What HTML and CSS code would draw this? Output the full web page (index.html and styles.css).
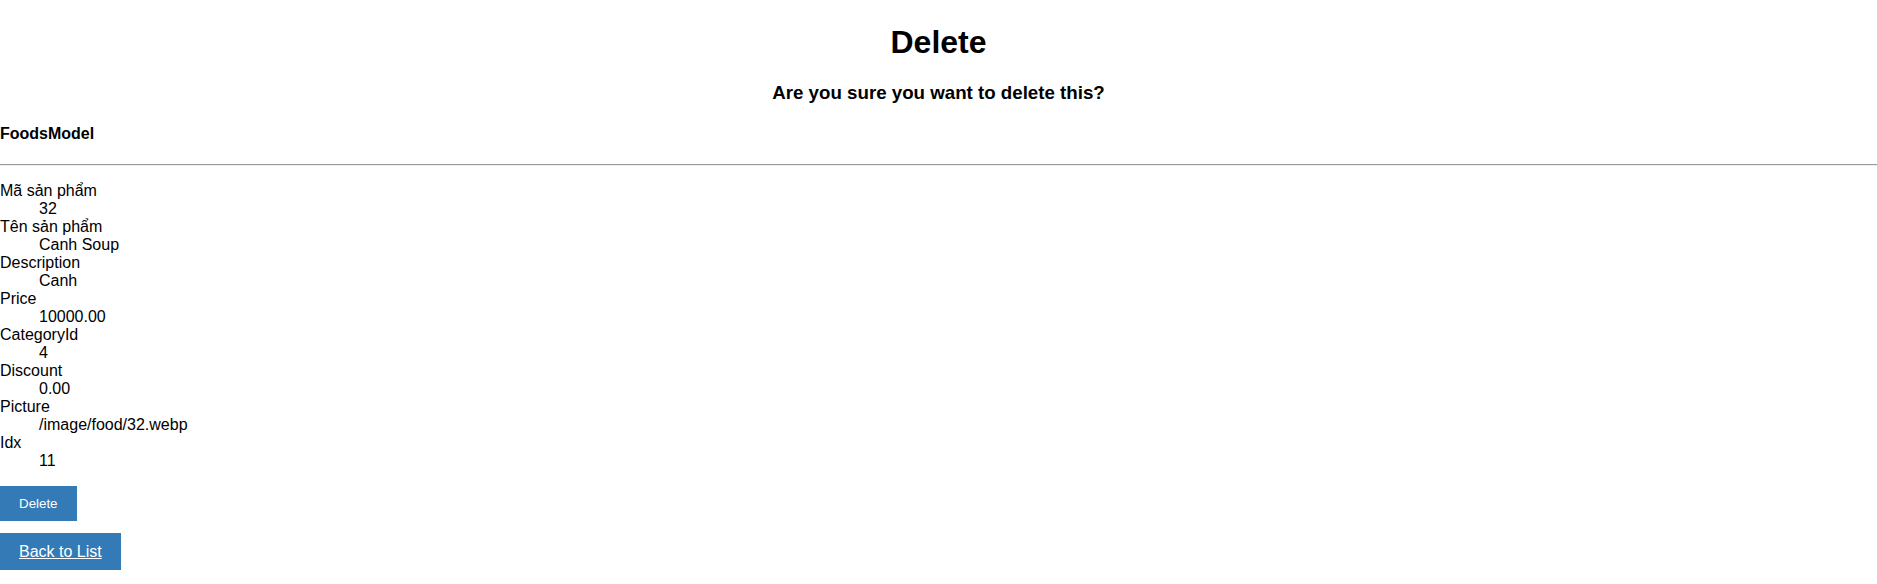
FILE: index.html
```html
<!DOCTYPE html>
<html lang="vi">
<head>
<meta charset="utf-8">
<title>Delete</title>
<link rel="stylesheet" href="styles.css">
</head>
<body>
<main class="page">
  <h1 class="title">Delete</h1>
  <h3 class="confirm">Are you sure you want to delete this?</h3>
  <div class="details">
    <h4 class="model">FoodsModel</h4>
    <hr class="rule">
    <dl class="fields">
      <dt>Mã sản phẩm</dt><dd>32</dd>
      <dt>Tên sản phẩm</dt><dd>Canh Soup</dd>
      <dt>Description</dt><dd>Canh</dd>
      <dt>Price</dt><dd>10000.00</dd>
      <dt>CategoryId</dt><dd>4</dd>
      <dt>Discount</dt><dd>0.00</dd>
      <dt>Picture</dt><dd>/image/food/32.webp</dd>
      <dt>Idx</dt><dd>11</dd>
    </dl>
    <form class="actions" onsubmit="return false;">
      <input type="submit" value="Delete" class="btn-delete">
      <a href="#" class="btn-back">Back to List</a>
    </form>
  </div>
</main>
</body>
</html>
```

FILE: styles.css
```css
html, body {
  margin: 0;
  padding: 0;
  background: #fff;
}
body {
  font-family: "Liberation Sans", Arial, sans-serif;
  font-size: 16px;
  color: #000;
}
.page {
  padding-top: 3px;
}
.title {
  font-size: 32px;
  font-weight: bold;
  text-align: center;
  margin: 21px 0;
}
.confirm {
  font-size: 18.72px;
  font-weight: bold;
  text-align: center;
  margin: 19px 0;
}
.model {
  font-size: 16px;
  font-weight: bold;
  margin: 21px 0;
}
.rule {
  margin: 8px 0;
  border: 0;
  border-top: 1px solid #9a9a9a;
  border-bottom: 1px solid #eeeeee;
  height: 0;
}
.fields {
  margin: 16px 0;
}
.fields dt {
  font-weight: normal;
}
.fields dd {
  margin-left: 39px;
}
.actions {
  display: flex;
  flex-direction: column;
  align-items: flex-start;
  gap: 12px;
}
.btn-delete {
  font-family: "Liberation Sans", Arial, sans-serif;
  font-size: 13.33px;
  background: #337ab7;
  color: #fff;
  border: 0;
  padding: 9px 19px;
  margin: 0;
  line-height: 17px;
}
.btn-back {
  display: inline-block;
  background: #337ab7;
  color: #fff;
  text-decoration: underline;
  padding: 9px 19px;
  line-height: 19px;
}
```
